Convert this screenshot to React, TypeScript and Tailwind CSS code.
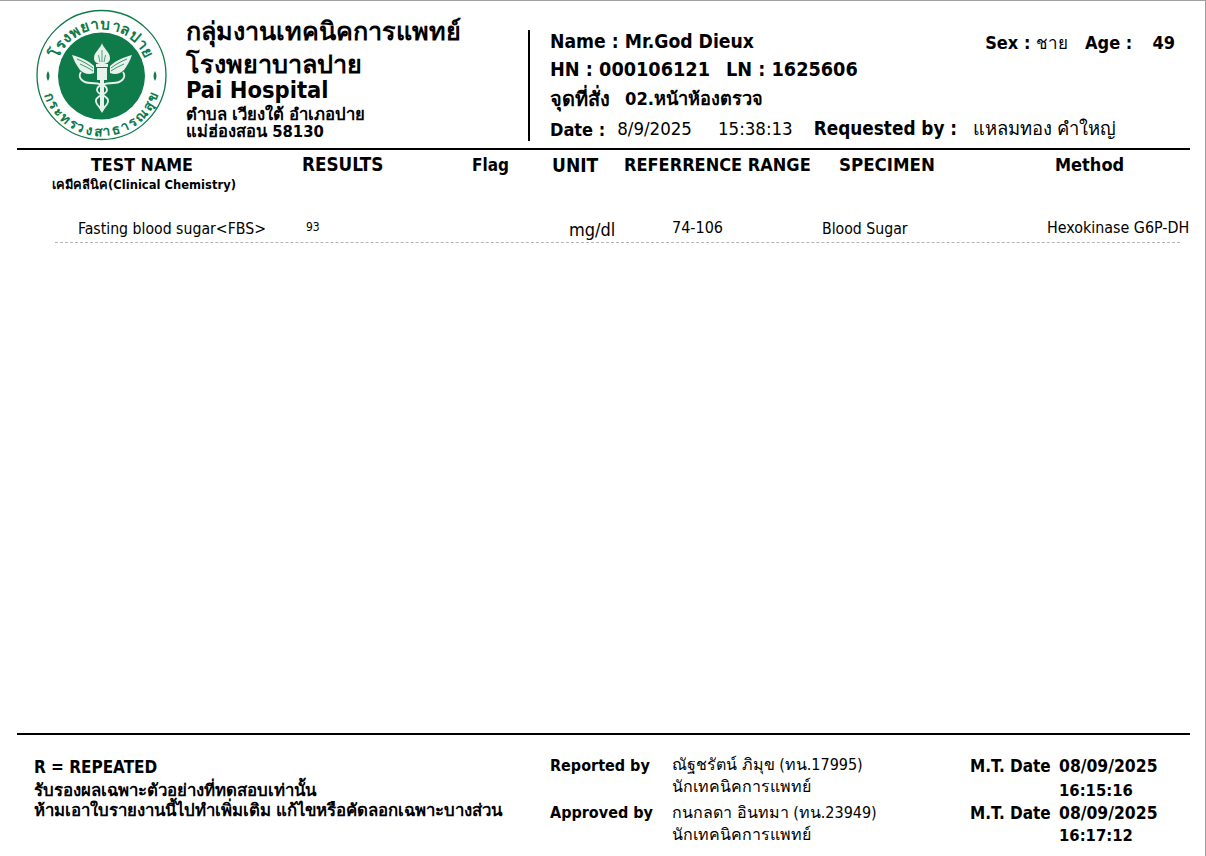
const font = "font-['Tahoma','DejaVu_Sans_Condensed','Noto_Sans',sans-serif]";

function Logo() {
  return (
    <svg width="134" height="134" viewBox="0 0 134 134" className="shrink-0">
      <defs>
        <path id="topArc" d="M 19.500 67 A 47 47 0 0 1 113.500 67" />
        <path id="bottomArc" d="M 6.500 67 A 60 60 0 0 0 126.500 67" />
      </defs>
      <circle cx="66.500" cy="66" r="64.500" fill="white" stroke="#0f7a4a" strokeWidth="1.300" />
      <circle cx="66.500" cy="67" r="43.500" fill="#0f7a4a" />
      <text fontSize="15" fontWeight="700" fill="#0f7a4a" fontFamily="'Noto Sans','DejaVu Sans',sans-serif">
        <textPath href="#topArc" startOffset="50%" textAnchor="middle" textLength="112">โรงพยาบาลปาย</textPath>
      </text>
      <text fontSize="13.500" fontWeight="700" fill="#0f7a4a" fontFamily="'Noto Sans','DejaVu Sans',sans-serif">
        <textPath href="#bottomArc" startOffset="50%" textAnchor="middle" textLength="150">กระทรวงสาธารณสุข</textPath>
      </text>
      <path d="M13 62c2 3 2 7 0 10-2-3-2-7 0-10zM120 62c2 3 2 7 0 10-2-3-2-7 0-10z" fill="#0f7a4a" />
      {/* flame */}
      <path d="M67 34c1 5 8 9 8 15 0 4-3 6-8 6s-8-2-8-6c0-6 7-10 8-15z" fill="#e8f2ec" />
      <path d="M67 41v12M63.500 46l1.500 7M70.500 46l-1.500 7" stroke="#0f7a4a" strokeWidth="0.700" fill="none" />
      {/* wings */}
      <path d="M37 46c7 2 16 5 22 11v7c-5 2-10 1-14-3-3-4-6-9-8-15z" fill="#e8f2ec" />
      <path d="M96 46c-7 2-16 5-22 11v7c5 2 10 1 14-3 3-4 6-9 8-15z" fill="#e8f2ec" transform="translate(1 0)" />
      <path d="M42 50c5 2 11 5 16 9M45 55c4 2 9 4 13 7" stroke="#0f7a4a" strokeWidth="0.800" fill="none" />
      <path d="M92 50c-5 2-11 5-16 9M89 55c-4 2-9 4-13 7" stroke="#0f7a4a" strokeWidth="0.800" fill="none" />
      {/* rod */}
      <rect x="61" y="55" width="12" height="3" fill="#e8f2ec" />
      <rect x="62" y="59" width="10" height="12" fill="#e8f2ec" />
      <rect x="65" y="71" width="4" height="28" fill="#e8f2ec" />
      <path d="M67 104l-3.500-6h7z" fill="#e8f2ec" />
      {/* snakes */}
      <path d="M46 63c-4 6 2 11 10 11s16 2 16 7-10 5-11 10 5 7 6 11" fill="none" stroke="#e8f2ec" strokeWidth="1.800" />
      <path d="M88 63c4 6-2 11-10 11s-16 2-16 7 10 5 11 10-5 7-6 11" fill="none" stroke="#e8f2ec" strokeWidth="1.800" />
    </svg>
  );
}

function Cell({ w, pl, children, className }: { w: string; pl?: string; children?: React.ReactNode; className?: string }) {
  return <div className={`${w} ${pl ?? ""} shrink-0 whitespace-nowrap ${className ?? ""}`}>{children}</div>;
}

export default function App() {
  return (
    <div className={`w-[1206px] h-[856px] bg-white text-black border-t border-t-[#a0a0a0] border-r border-r-[#a0a0a0] flex flex-col overflow-hidden ${font}`}>
      {/* header */}
      <div className="h-[149px] ml-[17px] w-[1173px] border-b-2 border-black flex shrink-0">
        <div className="pl-[18px] pt-[8px] w-[169px] shrink-0">
          <Logo />
        </div>
        <div className="w-[342px] shrink-0 font-bold pt-[16px]">
          <div className="text-[25.200px] leading-[30px]">กลุ่มงานเทคนิคการแพทย์</div>
          <div className="text-[25.200px] leading-[30px] mt-[3px]">โรงพยาบาลปาย</div>
          <div className="text-[23.500px] leading-[20px]">Pai Hospital</div>
          <div className="text-[16.700px] leading-[18px] mt-[5px]">ตำบล เวียงใต้ อำเภอปาย</div>
          <div className="text-[16.500px] leading-[17px]">แม่ฮ่องสอน 58130</div>
        </div>
        <div className="mt-[29px] mb-[7px] w-[2px] bg-black shrink-0" />
        <div className="ml-[20px] flex-1 pt-[28px] text-[18px] font-bold">
          <div className="flex h-[27px] items-center pr-[15px]">
            <span className="text-[19.200px]">Name : Mr.God Dieux</span>
            <span className="ml-auto">Sex : <span className="font-normal text-[17px]">ชาย</span></span>
            <span className="ml-[17px] w-[90px] flex justify-between"><span>Age :</span><span>49</span></span>
          </div>
          <div className="flex h-[27px] items-center text-[19.700px]">
            <span>HN : 000106121</span>
            <span className="ml-[16px]">LN : 1625606</span>
          </div>
          <div className="flex h-[32px] items-center">
            <span className="text-[20px]">จุดที่สั่ง</span>
            <span className="ml-[15px] text-[18.200px]">02.หน้าห้องตรวจ</span>
          </div>
          <div className="flex h-[28px] items-center">
            <span>Date :</span>
            <span className="ml-[12px] font-normal text-[18.500px]">8/9/2025</span>
            <span className="ml-[26px] font-normal text-[18.500px]">15:38:13</span>
            <span className="ml-[21px] text-[18.800px]">Requested by :</span>
            <span className="ml-[16px] font-normal text-[18.400px]">แหลมทอง คำใหญ่</span>
          </div>
        </div>
      </div>

      {/* table */}
      <div className="flex-1">
        <div className="flex pt-[4px] h-[24px] text-[18px] font-bold leading-[22px]">
          <Cell w="w-[302px]" pl="pl-[91px]" className="text-[17.700px]">TEST NAME</Cell>
          <Cell w="w-[170px]" className="text-[18.700px]">RESULTS</Cell>
          <Cell w="w-[80px]" className="text-[17px]">Flag</Cell>
          <Cell w="w-[72px]" className="text-[19px]">UNIT</Cell>
          <Cell w="w-[215px]">REFERRENCE RANGE</Cell>
          <Cell w="w-[216px]" className="text-[18.500px]">SPECIMEN</Cell>
          <Cell w="w-[100px]">Method</Cell>
        </div>
        <div className="pl-[52px] mt-[3px] text-[12.850px] font-bold leading-[16px]">เคมีคลีนิค(Clinical Chemistry)</div>
        <div className="ml-[55px] w-[1125px] mt-[25px] h-[25px] border-b border-dashed border-[#b5b5b5] flex items-start text-[16px] leading-[22px]">
          <Cell w="w-[251px]" pl="pl-[23px]" className="text-[15.700px]">Fasting blood sugar&lt;FBS&gt;</Cell>
          <Cell w="w-[263px]" className="text-[12px] leading-[18px]">93</Cell>
          <Cell w="w-[103px]" className="text-[18px] leading-[24px]">mg/dl</Cell>
          <Cell w="w-[150px]" className="leading-[20px]">74-106</Cell>
          <Cell w="w-[225px]" className="text-[15.700px]">Blood Sugar</Cell>
          <Cell w="w-[142px]" className="text-[15.900px] leading-[20px]">Hexokinase G6P-DH</Cell>
        </div>
      </div>

      {/* footer */}
      <div className="h-[123px] ml-[17px] w-[1173px] border-t-2 border-black flex shrink-0">
        <div className="w-[533px] pl-[17px] pt-[21px] shrink-0 font-bold">
          <div className="text-[17px] leading-[22px]">R = REPEATED</div>
          <div className="text-[16.800px] leading-[20px] mt-[2px]">รับรองผลเฉพาะตัวอย่างที่ทดสอบเท่านั้น</div>
          <div className="text-[16.800px] leading-[20px]">ห้ามเอาใบรายงานนี้ไปทำเพิ่มเติม แก้ไขหรือคัดลอกเฉพาะบางส่วน</div>
        </div>
        <div className="w-[122px] pt-[19px] shrink-0 text-[16px] font-bold leading-[24px]">
          <div className="h-[47px]">Reported by</div>
          <div>Approved by</div>
        </div>
        <div className="w-[298px] pt-[19px] shrink-0 text-[16px]">
          <div className="h-[22px] leading-[22px]">ณัฐชรัตน์ ภิมุข  (ทน.17995)</div>
          <div className="h-[21px] leading-[21px]">นักเทคนิคการแพทย์</div>
          <div className="h-[22px] leading-[22px] mt-[5px]">กนกลดา  อินทมา (ทน.23949)</div>
          <div className="h-[22px] leading-[22px]">นักเทคนิคการแพทย์</div>
        </div>
        <div className="flex-1 pt-[19px] text-[17.400px] font-bold">
          <div className="flex h-[24px] leading-[24px]"><span className="w-[89px] text-[17px]">M.T. Date</span><span>08/09/2025</span></div>
          <div className="pl-[89px] h-[23px] leading-[25px] text-[16.500px]">16:15:16</div>
          <div className="flex h-[23px] leading-[24px]"><span className="w-[89px] text-[17px]">M.T. Date</span><span>08/09/2025</span></div>
          <div className="pl-[89px] leading-[24px] text-[16.500px]">16:17:12</div>
        </div>
      </div>
    </div>
  );
}
